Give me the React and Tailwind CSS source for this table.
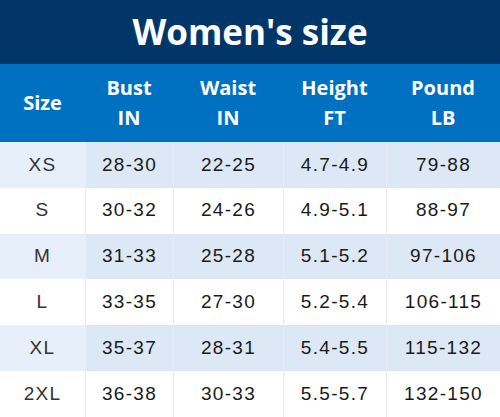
const columns = [
	['Size'],
	['Bust', 'IN'],
	['Waist', 'IN'],
	['Height', 'FT'],
	['Pound', 'LB'],
]

const rows = [
	['XS', '28-30', '22-25', '4.7-4.9', '79-88'],
	['S', '30-32', '24-26', '4.9-5.1', '88-97'],
	['M', '31-33', '25-28', '5.1-5.2', '97-106'],
	['L', '33-35', '27-30', '5.2-5.4', '106-115'],
	['XL', '35-37', '28-31', '5.4-5.5', '115-132'],
	['2XL', '36-38', '30-33', '5.5-5.7', '132-150'],
]

const grid = 'grid grid-cols-[85px_88px_110px_103px_114px]'

export default function App() {
	return (
		<div className="h-[417px] w-[500px] overflow-hidden bg-white">
			<div className="flex h-[64px] items-center justify-center bg-[#023568] font-['Open_Sans',sans-serif] text-[35px] font-bold text-white">
				Women's size
			</div>

			<div className={`${grid} h-[78px] bg-[#0070c0] font-['Open_Sans',sans-serif] text-[20px] font-bold leading-[30px] text-white`}>
				{columns.map((col) => (
					<div key={col[0]} className="flex flex-col items-center justify-center">
						{col.map((line) => (
							<span key={line}>{line}</span>
						))}
					</div>
				))}
			</div>

			<div className="grid h-[275px] grid-rows-6">
				{rows.map((row, index) => {
					const shaded = index % 2 === 0
					return (
						<div
							key={row[0]}
							className={`${grid} font-['Liberation_Sans',Arial,sans-serif] text-[19px] tracking-[1.3px] text-[#1a1a1a] ${
								shaded ? 'bg-[#dce8f5]' : 'bg-white'
							}`}
						>
							{row.map((cell, i) => (
								<div
									key={i}
									className={`flex items-center justify-center ${
										i > 0 ? 'border-l border-[#e9edf2]' : 'text-[#333]'
									} ${i === 0 && shaded ? 'bg-[#e7f0fa]' : ''}`}
								>
									{cell}
								</div>
							))}
						</div>
					)
				})}
			</div>
		</div>
	)
}
